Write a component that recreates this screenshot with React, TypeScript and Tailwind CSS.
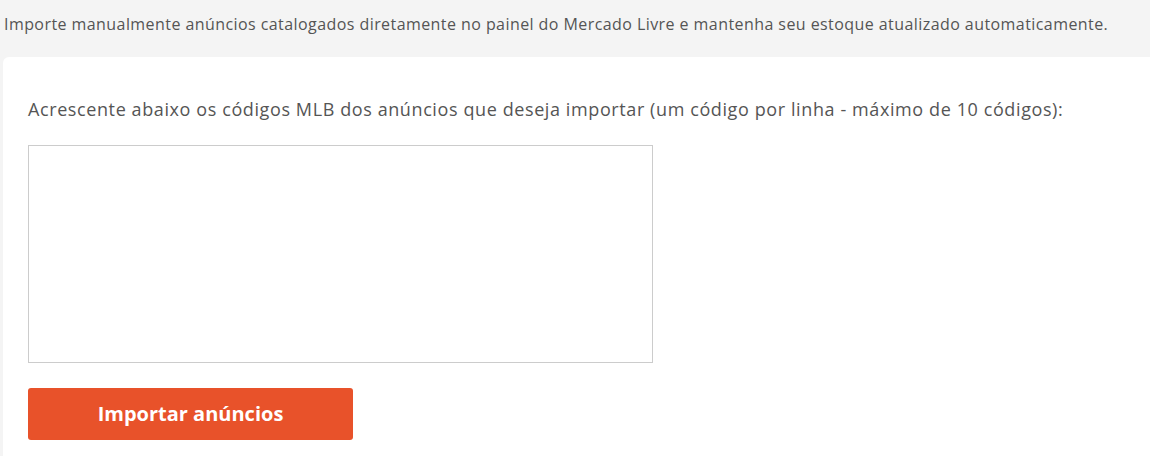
export default function App() {
  return (
    <div className="min-h-[456px] bg-[#f4f4f4] pl-[3px] text-[#555555]" style={{ fontFamily: '"Open Sans", "Noto Sans", sans-serif' }}>
      <p className="pl-px pt-[11px] text-[16px] leading-[26px] tracking-[0.43px] h-[57px]">
        Importe manualmente anúncios catalogados diretamente no painel do Mercado Livre e mantenha seu estoque atualizado automaticamente.
      </p>
      <div className="bg-white rounded-tl-[6px] min-h-[399px] px-[25px] pt-[38px]">
        <label htmlFor="codigos" className="block text-[18px] leading-[28px] tracking-[0.6px]">
          Acrescente abaixo os códigos MLB dos anúncios que deseja importar (um código por linha - máximo de 10 códigos):
        </label>
        <textarea
          id="codigos"
          className="block mt-[22px] w-[625px] h-[218px] border border-[#cccccc] bg-white resize-none outline-none p-2"
        />
        <button
          type="button"
          className="mt-[25px] w-[325px] h-[52px] rounded-[3px] bg-[#e8522a] text-white text-[20px] font-bold"
        >
          Importar anúncios
        </button>
      </div>
    </div>
  );
}
